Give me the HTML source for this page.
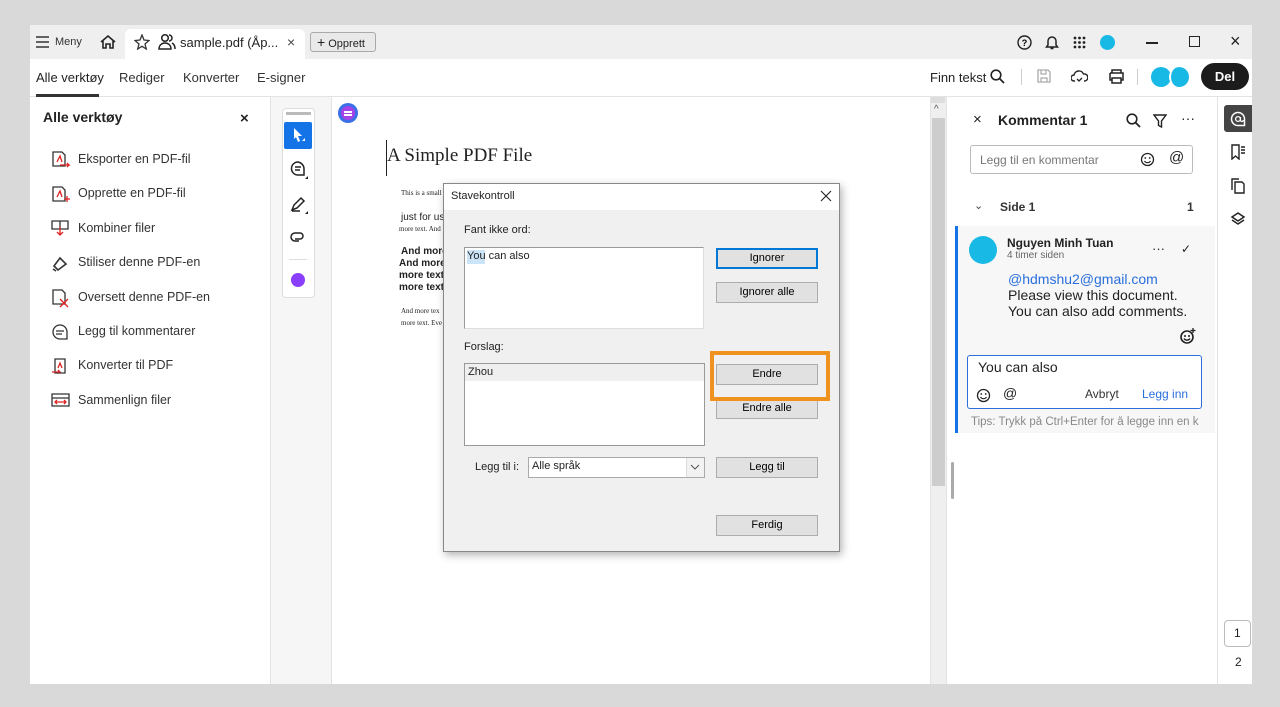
<!DOCTYPE html>
<html><head><meta charset="utf-8"><style>
*{box-sizing:border-box;margin:0;padding:0}
body{width:1280px;height:707px;background:#d9d9d9;font-family:"Liberation Sans",sans-serif;color:#222;position:relative;overflow:hidden}
.a{position:absolute}
.app{left:30px;top:25px;width:1222px;height:659px;background:#fff}
.t{position:absolute;white-space:nowrap}
.btn{position:absolute;background:#e1e1e1;border:1px solid #adadad;font-size:11px;text-align:center;line-height:19px;color:#000}
svg{position:absolute}
</style></head><body>
<div class="a app"></div>
<div class="a" style="left:30px;top:25px;width:1222px;height:34px;background:#efefef"></div>
<div class="a" style="left:125px;top:29px;width:180px;height:30px;background:#fff;border-radius:6px 6px 0 0"></div>
<svg style="left:36px;top:36px" width="14" height="12"><path d="M0 1h13M0 6h13M0 11h13" stroke="#333" stroke-width="1.5"/></svg>
<div class="t" style="left:55px;top:36px;font-size:11px;color:#333">Meny</div>
<svg style="left:99px;top:34px" width="18" height="16"><path d="M2 8L9 2l7 6M4 7v7h3v-4h4v4h3V7" fill="none" stroke="#222" stroke-width="1.6"/></svg>
<svg style="left:134px;top:34px" width="16" height="16"><path d="M8 1l2 5 5 .5-4 3.5 1.3 5L8 12.3 3.7 15 5 10 1 6.5 6 6z" fill="none" stroke="#333" stroke-width="1.3"/></svg>
<svg style="left:158px;top:33px" width="18" height="17"><circle cx="7" cy="5" r="3.3" fill="none" stroke="#222" stroke-width="1.5"/><path d="M1 16c0-4 3-6 6-6s6 2 6 6z" fill="none" stroke="#222" stroke-width="1.5"/><path d="M11 2a3 3 0 010 6M14 10c2 1 3 3 3 6" fill="none" stroke="#222" stroke-width="1.5"/></svg>
<div class="t" style="left:180px;top:35px;font-size:13px">sample.pdf (Åp...</div>
<div class="t" style="left:287px;top:34px;font-size:14px;color:#444">×</div>
<div class="a" style="left:310px;top:32px;width:66px;height:20px;border:1px solid #aaa;border-radius:3px;background:#e9e9e9"></div>
<div class="t" style="left:317px;top:34px;font-size:11px;color:#222"><b style="font-size:14px;font-weight:normal">+</b> Opprett</div>
<svg style="left:1017px;top:35px" width="15" height="15"><circle cx="7.5" cy="7.5" r="6.5" fill="none" stroke="#222" stroke-width="1.4"/><text x="4.8" y="11" font-size="9" font-weight="bold" font-family="Liberation Sans">?</text></svg>
<svg style="left:1045px;top:34px" width="14" height="16"><path d="M3 11V7a4 4 0 018 0v4l1.5 2h-11zM5.5 14.5h3" fill="none" stroke="#222" stroke-width="1.5"/></svg>
<svg style="left:1073px;top:36px" width="13" height="13" fill="#222"><circle cx="2" cy="2" r="1.4"/><circle cx="6.5" cy="2" r="1.4"/><circle cx="11" cy="2" r="1.4"/><circle cx="2" cy="6.5" r="1.4"/><circle cx="6.5" cy="6.5" r="1.4"/><circle cx="11" cy="6.5" r="1.4"/><circle cx="2" cy="11" r="1.4"/><circle cx="6.5" cy="11" r="1.4"/><circle cx="11" cy="11" r="1.4"/></svg>
<div class="a" style="left:1100px;top:35px;width:15px;height:15px;border-radius:50%;background:#19b9e6"></div>
<div class="a" style="left:1146px;top:42px;width:12px;height:1.5px;background:#222"></div>
<div class="a" style="left:1189px;top:36px;width:11px;height:11px;border:1.3px solid #222"></div>
<div class="t" style="left:1230px;top:31px;font-size:18px;color:#222">×</div>
<div class="a" style="left:30px;top:96px;width:1222px;height:1px;background:#e3e3e3"></div>
<div class="t" style="left:36px;top:70px;font-size:13px">Alle verktøy</div>
<div class="a" style="left:36px;top:94px;width:63px;height:3px;background:#333"></div>
<div class="t" style="left:119px;top:70px;font-size:13px;color:#333">Rediger</div>
<div class="t" style="left:183px;top:70px;font-size:13px;color:#333">Konverter</div>
<div class="t" style="left:257px;top:70px;font-size:13px;color:#333">E-signer</div>
<div class="t" style="left:930px;top:70px;font-size:13px">Finn tekst</div>
<svg style="left:990px;top:69px" width="15" height="15"><circle cx="6" cy="6" r="4.8" fill="none" stroke="#222" stroke-width="1.6"/><path d="M9.5 9.5L14 14" stroke="#222" stroke-width="1.8"/></svg>
<div class="a" style="left:1021px;top:69px;width:1px;height:16px;background:#ccc"></div>
<svg style="left:1037px;top:69px" width="14" height="14"><path d="M1 1h10l2 2v10H1z" fill="none" stroke="#aaa" stroke-width="1.3"/><path d="M4 1v4h5V1M4 13V9h6v4" fill="none" stroke="#aaa" stroke-width="1.2"/></svg>
<svg style="left:1071px;top:69px" width="17" height="14"><path d="M4 12H3a3 3 0 010-6 5 5 0 019.5-1A3.5 3.5 0 0114 12h-1" fill="none" stroke="#222" stroke-width="1.4"/><path d="M6 10l2 2 3-3" fill="none" stroke="#222" stroke-width="1.3"/></svg>
<svg style="left:1108px;top:69px" width="17" height="15"><path d="M4 4V1h9v3M2 4h13v7h-2M4 11H2V4M4 9h9v5H4z" fill="none" stroke="#222" stroke-width="1.5"/></svg>
<div class="a" style="left:1137px;top:69px;width:1px;height:16px;background:#ccc"></div>
<div class="a" style="left:1151px;top:67px;width:20px;height:20px;border-radius:50%;background:#19b9e6"></div>
<div class="a" style="left:1169px;top:67px;width:20px;height:20px;border-radius:50%;background:#19b9e6;border-left:2px solid #fff"></div>
<div class="a" style="left:1201px;top:63px;width:48px;height:27px;border-radius:14px;background:#1c1c1c;color:#fff;font-size:13px;font-weight:bold;text-align:center;line-height:27px">Del</div>
<div class="a" style="left:270px;top:97px;width:1px;height:587px;background:#e3e3e3"></div>
<div class="t" style="left:43px;top:109px;font-size:14px;font-weight:bold">Alle verktøy</div>
<div class="t" style="left:240px;top:110px;font-size:15px;font-weight:bold">×</div>
<div class="t" style="left:78px;top:142px;font-size:12.5px;color:#333;line-height:34.4px">Eksporter en PDF-fil<br>Opprette en PDF-fil<br>Kombiner filer<br>Stiliser denne PDF-en<br>Oversett denne PDF-en<br>Legg til kommentarer<br>Konverter til PDF<br>Sammenlign filer</div>
<svg style="left:50px;top:150px" width="22" height="260" fill="none" stroke-width="1.3">
<g stroke="#333"><path d="M3 2h9l3 3v11H3z"/></g><path d="M7 12l3-6 2 6M10 15h9l-2-2M19 15l-2 2" stroke="#d22"/>
<g transform="translate(0,35)"><path d="M3 2h9l3 3v11H3z" stroke="#333"/><path d="M7 12l3-6 2 6M14 14h6M17 11v6" stroke="#d22"/></g>
<g transform="translate(0,69)"><path d="M2 2h16v8H2zM10 2v8" stroke="#333"/><path d="M10 8v8M7 13l3 3 3-3" stroke="#d22"/></g>
<g transform="translate(0,104)"><path d="M4 12l6-8 6 6-8 6zM3 15l3 2" stroke="#333" stroke-width="1.6"/></g>
<g transform="translate(0,138)"><path d="M3 2h9l3 3v11H3z" stroke="#333"/><path d="M10 11l8 8M18 11l-8 8" stroke="#d22"/></g>
<g transform="translate(0,172)"><path d="M10 3a7 7 0 100 14h7v-7a7 7 0 00-7-7zM6 9h8M6 12h6" stroke="#333"/></g>
<g transform="translate(0,207)"><path d="M5 2h10v14H5z" stroke="#333"/><path d="M8 11l2-5 2 5M2 15h8l-2-2" stroke="#d22"/></g>
<g transform="translate(0,241)"><path d="M2 3h17v12H2zM2 7h17" stroke="#333"/><path d="M5 11h11M7 9l-2 2 2 2M14 9l2 2-2 2" stroke="#d22"/></g>
</svg>
<div class="a" style="left:271px;top:97px;width:61px;height:587px;background:#f6f6f6;border-right:1px solid #e3e3e3"></div>
<div class="a" style="left:282px;top:108px;width:33px;height:190px;background:#fff;border:1px solid #ddd;border-radius:4px"></div>
<div class="a" style="left:286px;top:112px;width:25px;height:3px;background:#bbb"></div>
<div class="a" style="left:284px;top:122px;width:28px;height:27px;background:#1473e6;border-radius:2px"></div>
<svg style="left:292px;top:127px" width="14" height="16"><path d="M2 1l8 8H6l2 5-2 1-2-5-2 2z" fill="#fff"/><path d="M13 14l-3 0 3-3z" fill="#fff"/></svg>
<svg style="left:289px;top:160px" width="20" height="20"><path d="M9 2a6.5 6.5 0 100 13h6V9a7 7 0 00-6-7zM6 7h6M6 10h5" fill="none" stroke="#222" stroke-width="1.5"/><path d="M19 19h-3l3-3z" fill="#222"/></svg>
<svg style="left:289px;top:195px" width="20" height="20"><path d="M3 15l2-5 7-7 3 3-7 7zM3 16h8" fill="none" stroke="#222" stroke-width="1.5"/><path d="M19 19h-3l3-3z" fill="#222"/></svg>
<svg style="left:289px;top:230px" width="18" height="16"><path d="M10 11h-4a4 4 0 010-8h5a3 3 0 010 6H6" fill="none" stroke="#222" stroke-width="1.5"/></svg>
<div class="a" style="left:289px;top:259px;width:18px;height:1px;background:#ddd"></div>
<div class="a" style="left:291px;top:273px;width:14px;height:14px;border-radius:50%;background:#8a3ffc"></div>
<div class="a" style="left:338px;top:103px;width:20px;height:20px;border-radius:50%;background:#3b6fe6"></div>
<div class="a" style="left:341px;top:106px;width:14px;height:14px;border-radius:50%;background:#a543e8"></div>
<div class="a" style="left:344px;top:111px;width:8px;height:1.5px;background:#fff"></div><div class="a" style="left:344px;top:114px;width:8px;height:1.5px;background:#fff"></div>
<div class="a" style="left:386px;top:140px;width:1px;height:36px;background:#222"></div>
<div class="t" style="left:387px;top:145px;font-family:'Liberation Serif',serif;font-size:19px">A Simple PDF File</div>
<div class="t" style="left:401px;top:189px;font-family:'Liberation Serif',serif;font-size:7px">This is a small</div>
<div class="t" style="left:401px;top:212px;font-size:10px">just for us</div>
<div class="t" style="left:399px;top:225px;font-family:'Liberation Serif',serif;font-size:7px">more text. And</div>
<div class="t" style="left:401px;top:246px;font-size:10px;font-weight:bold;line-height:12px">And more<br><span style="margin-left:-2px">And more</span><br><span style="margin-left:-2px">more text</span><br><span style="margin-left:-2px">more text</span></div>
<div class="t" style="left:401px;top:305px;font-family:'Liberation Serif',serif;font-size:7px;line-height:12px">And more tex<br>more text. Eve</div>
<div class="a" style="left:930px;top:97px;width:16px;height:587px;background:#efefef;border-left:1px solid #e3e3e3"></div>
<div class="a" style="left:931px;top:97px;width:14px;height:6px;background:#ddd"></div>
<div class="t" style="left:934px;top:104px;font-size:10px;color:#555">^</div>
<div class="a" style="left:932px;top:118px;width:13px;height:368px;background:#cdcdcd"></div>
<div class="a" style="left:946px;top:97px;width:1px;height:587px;background:#e3e3e3"></div>
<div class="a" style="left:951px;top:462px;width:3px;height:37px;background:#aaa;border-radius:2px"></div>
<div class="t" style="left:973px;top:111px;font-size:15px">×</div>
<div class="t" style="left:998px;top:112px;font-size:14px;font-weight:bold">Kommentar 1</div>
<svg style="left:1126px;top:113px" width="15" height="15"><circle cx="6" cy="6" r="4.8" fill="none" stroke="#222" stroke-width="1.6"/><path d="M9.5 9.5L14 14" stroke="#222" stroke-width="1.8"/></svg>
<svg style="left:1153px;top:114px" width="14" height="15"><path d="M1 1h12L8.5 7v6l-3-1.5V7z" fill="none" stroke="#222" stroke-width="1.4"/></svg>
<div class="t" style="left:1181px;top:110px;font-size:14px">···</div>
<div class="a" style="left:970px;top:145px;width:223px;height:29px;border:1px solid #bbb;border-radius:3px"></div>
<div class="t" style="left:980px;top:153px;font-size:12px;color:#777">Legg til en kommentar</div>
<svg style="left:1140px;top:152px" width="15" height="15"><circle cx="7.5" cy="7.5" r="6" fill="none" stroke="#222" stroke-width="1.3"/><circle cx="5.3" cy="6" r=".9" fill="#222"/><circle cx="9.7" cy="6" r=".9" fill="#222"/><path d="M4.5 9a3.5 3.5 0 006 0" fill="none" stroke="#222" stroke-width="1.2"/></svg>
<div class="t" style="left:1169px;top:149px;font-size:15px">@</div>
<div class="t" style="left:974px;top:199px;font-size:11px;color:#444">⌄</div>
<div class="t" style="left:1000px;top:200px;font-size:12px;font-weight:bold;color:#333">Side 1</div>
<div class="t" style="left:1187px;top:200px;font-size:12px;font-weight:bold;color:#333">1</div>
<div class="a" style="left:955px;top:226px;width:260px;height:207px;background:#f7f7f7"></div>
<div class="a" style="left:955px;top:226px;width:3px;height:207px;background:#1473e6"></div>
<div class="a" style="left:969px;top:236px;width:28px;height:28px;border-radius:50%;background:#19b9e6"></div>
<div class="t" style="left:1007px;top:236px;font-size:12px;font-weight:bold">Nguyen Minh Tuan</div>
<div class="t" style="left:1007px;top:250px;font-size:10px;color:#666">4 timer siden</div>
<div class="t" style="left:1152px;top:241px;font-size:13px">···</div>
<div class="t" style="left:1181px;top:242px;font-size:12px">✓</div>
<div class="t" style="left:1008px;top:271px;font-size:14px;color:#2a6fdc">@hdmshu2@gmail.com</div>
<div class="t" style="left:1008px;top:287px;font-size:14px;line-height:16px">Please view this document.<br>You can also add comments.</div>
<svg style="left:1179px;top:328px" width="17" height="17"><circle cx="8" cy="9" r="6" fill="none" stroke="#222" stroke-width="1.6"/><circle cx="6" cy="8" r="1" fill="#222"/><circle cx="10" cy="8" r="1" fill="#222"/><path d="M5 10.5a3.5 3.5 0 006 0" fill="none" stroke="#222" stroke-width="1.3"/><path d="M14 0v5M11.5 2.5h5" stroke="#222" stroke-width="1.3"/></svg>
<div class="a" style="left:967px;top:355px;width:235px;height:54px;border:1px solid #2a6fdc;border-radius:3px;background:#fff"></div>
<div class="t" style="left:978px;top:359px;font-size:14px">You can also</div>
<svg style="left:976px;top:388px" width="15" height="15"><circle cx="7.5" cy="7.5" r="6" fill="none" stroke="#222" stroke-width="1.3"/><circle cx="5.3" cy="6" r=".9" fill="#222"/><circle cx="9.7" cy="6" r=".9" fill="#222"/><path d="M4.5 9a3.5 3.5 0 006 0" fill="none" stroke="#222" stroke-width="1.2"/></svg>
<div class="t" style="left:1003px;top:385px;font-size:14px">@</div>
<div class="t" style="left:1085px;top:387px;font-size:12px;color:#333">Avbryt</div>
<div class="t" style="left:1142px;top:387px;font-size:12px;color:#2a6fdc">Legg inn</div>
<div class="t" style="left:971px;top:416px;font-size:11.5px;color:#888;width:244px;overflow:hidden">Tips: Trykk på Ctrl+Enter for å legge inn en k</div>
<div class="a" style="left:1217px;top:97px;width:1px;height:587px;background:#e3e3e3"></div>
<div class="a" style="left:1224px;top:105px;width:28px;height:27px;background:#444;border-radius:3px 0 0 3px"></div>
<svg style="left:1230px;top:111px" width="16" height="16"><path d="M8 1.5a6.5 6.5 0 100 13h6.5V8A6.5 6.5 0 008 1.5z" fill="none" stroke="#fff" stroke-width="1.5"/><circle cx="8" cy="8" r="2.4" fill="none" stroke="#fff" stroke-width="1.3"/><path d="M10.4 6v3a1.5 1.5 0 003 0" fill="none" stroke="#fff" stroke-width="1.3"/></svg>
<svg style="left:1230px;top:144px" width="16" height="16"><path d="M2 1h7v14l-3.5-3L2 15zM11 3h4M11 6h4M11 9h4" fill="none" stroke="#222" stroke-width="1.4"/></svg>
<svg style="left:1231px;top:178px" width="14" height="16"><path d="M4 4h7l2 2v9H4zM1 12V1h7" fill="none" stroke="#222" stroke-width="1.4"/></svg>
<svg style="left:1230px;top:211px" width="16" height="16"><path d="M8 2l6 4-6 4-6-4zM2 9l6 4 6-4" fill="none" stroke="#222" stroke-width="1.5"/></svg>
<div class="a" style="left:1224px;top:620px;width:27px;height:27px;border:1px solid #bbb;border-radius:4px"></div>
<div class="t" style="left:1234px;top:626px;font-size:12px">1</div>
<div class="t" style="left:1235px;top:655px;font-size:12px">2</div>
<div class="a" style="left:443px;top:183px;width:397px;height:369px;background:#f0f0f0;border:1px solid #888;box-shadow:2px 3px 8px rgba(0,0,0,.3)"></div>
<div class="a" style="left:444px;top:184px;width:395px;height:26px;background:#fff"></div>
<div class="t" style="left:451px;top:190px;font-size:11px">Stavekontroll</div>
<svg style="left:820px;top:190px" width="12" height="12"><path d="M1 1l10 10M11 1L1 11" stroke="#222" stroke-width="1.1"/></svg>
<div class="t" style="left:464px;top:224px;font-size:11px">Fant ikke ord:</div>
<div class="a" style="left:464px;top:247px;width:240px;height:82px;background:#fff;border:1px solid #999;border-right-color:#ddd;border-bottom-color:#ddd"></div>
<div class="a" style="left:467px;top:250px;width:18px;height:14px;background:#cce4f7"></div>
<div class="t" style="left:467px;top:250px;font-size:11px">You can also</div>
<div class="btn" style="left:716px;top:248px;width:102px;height:21px;border:2px solid #0078d7;line-height:17px">Ignorer</div>
<div class="btn" style="left:716px;top:282px;width:102px;height:21px">Ignorer alle</div>
<div class="t" style="left:464px;top:341px;font-size:11px">Forslag:</div>
<div class="a" style="left:464px;top:363px;width:241px;height:83px;background:#fff;border:1px solid #999"></div>
<div class="a" style="left:465px;top:364px;width:239px;height:17px;background:#efefef"></div>
<div class="t" style="left:468px;top:366px;font-size:11px">Zhou</div>
<div class="btn" style="left:716px;top:364px;width:102px;height:21px">Endre</div>
<div class="btn" style="left:716px;top:398px;width:102px;height:21px">Endre alle</div>
<div class="a" style="left:710px;top:351px;width:120px;height:50px;border:4px solid #f0921f"></div>
<div class="t" style="left:475px;top:461px;font-size:11px">Legg til i:</div>
<div class="a" style="left:528px;top:457px;width:177px;height:21px;background:#fff;border:1px solid #aaa"></div>
<div class="t" style="left:532px;top:460px;font-size:11px">Alle språk</div>
<div class="a" style="left:686px;top:458px;width:18px;height:19px;background:#f2f2f2;border-left:1px solid #ddd"></div>
<svg style="left:690px;top:464px" width="10" height="7"><path d="M1 1l4 4 4-4" fill="none" stroke="#555" stroke-width="1"/></svg>
<div class="btn" style="left:716px;top:457px;width:102px;height:21px">Legg til</div>
<div class="btn" style="left:716px;top:515px;width:102px;height:21px">Ferdig</div>
</body></html>
